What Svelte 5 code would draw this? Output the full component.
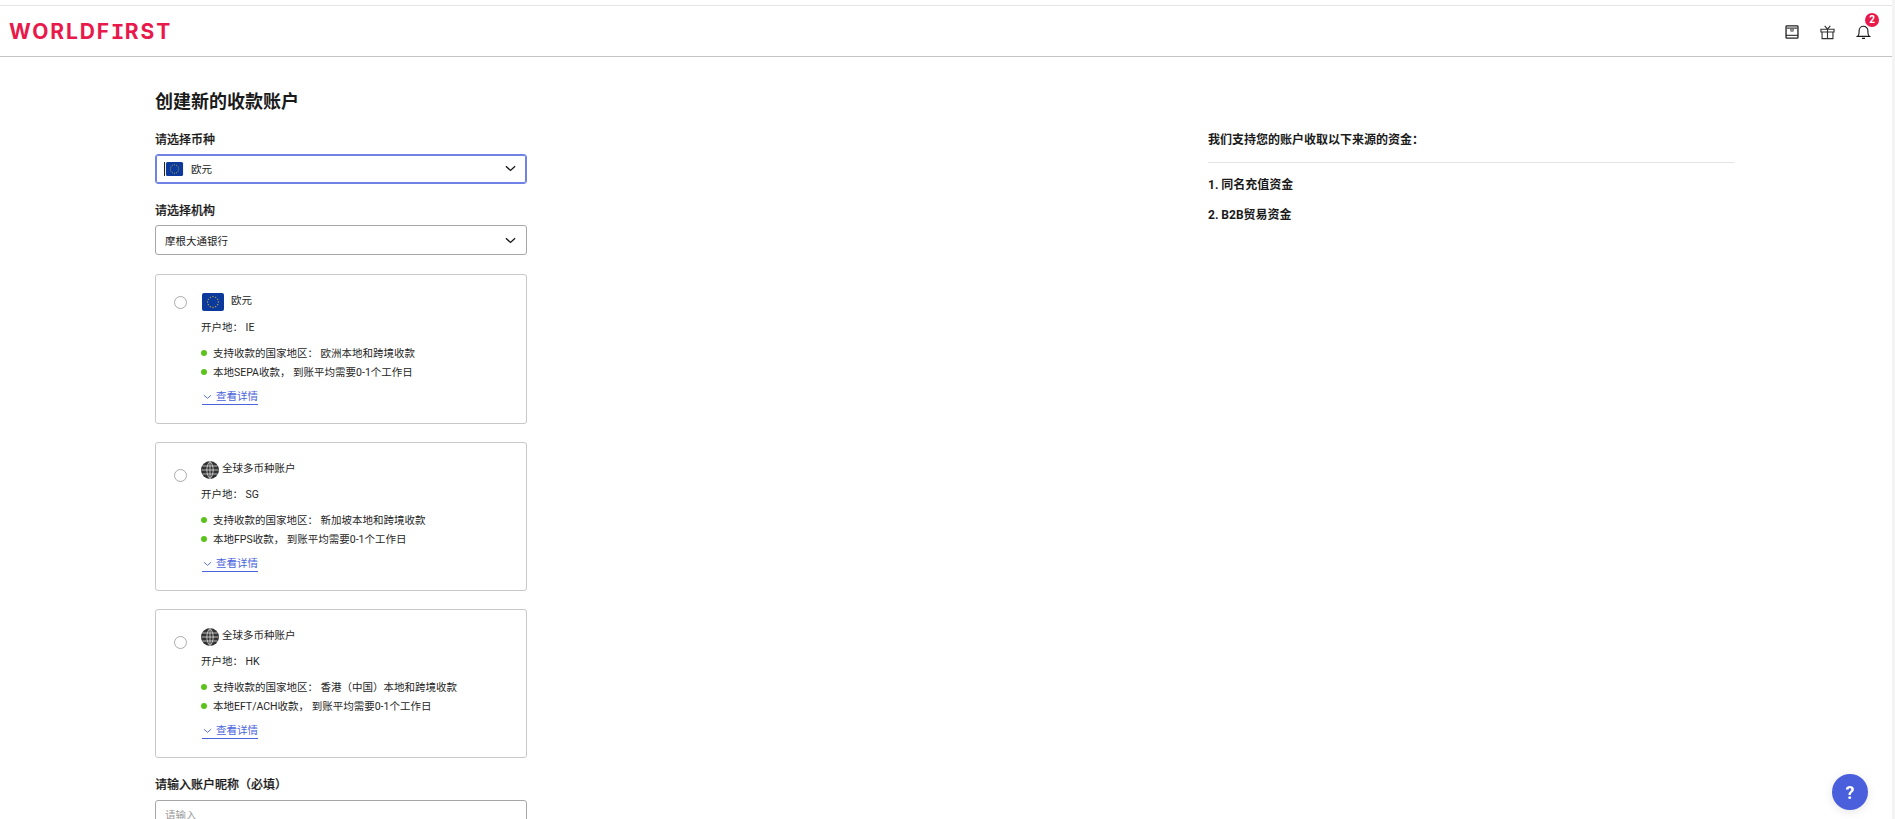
<script lang="ts">
	const cards = [
		{
			flag: true,
			name: '欧元',
			region: 'IE',
			reach: '欧洲本地和跨境收款',
			local: '本地SEPA收款，',
			speed: '到账平均需要0-1个工作日'
		},
		{
			flag: false,
			name: '全球多币种账户',
			region: 'SG',
			reach: '新加坡本地和跨境收款',
			local: '本地FPS收款，',
			speed: '到账平均需要0-1个工作日'
		},
		{
			flag: false,
			name: '全球多币种账户',
			region: 'HK',
			reach: '香港（中国）本地和跨境收款',
			local: '本地EFT/ACH收款，',
			speed: '到账平均需要0-1个工作日'
		}
	];

	// twelve stars round the flag's centre
	const stars = Array.from({ length: 12 }, (_, i) => ({
		x: 11 + 5.4 * Math.cos((i * Math.PI) / 6),
		y: 9 + 5.4 * Math.sin((i * Math.PI) / 6)
	}));
</script>

{#snippet euFlag(cls)}
	<svg class={cls} viewBox="0 0 22 18" aria-label="EU">
		<rect width="22" height="18" rx="2" fill="#0b3a9c" />
		{#each stars as s}
			<circle cx={s.x} cy={s.y} r="0.65" fill="#c9b13c" />
		{/each}
	</svg>
{/snippet}

{#snippet chevron()}
	<svg class="chevron" viewBox="0 0 12 7" aria-hidden="true">
		<path d="M1 1l5 4.6L11 1" fill="none" stroke="#1a1a1a" stroke-width="1.5" />
	</svg>
{/snippet}

<div class="page">
	<header class="topbar">
		<span class="logo">WORLDF<span class="logo-i">I</span>RST</span>
		<div class="actions">
			<svg class="icon box" viewBox="0 0 16 16" aria-label="Inbox">
				<rect x="1.2" y="1" width="13.6" height="14" rx="0.8" fill="none" stroke="#222" stroke-width="1.5" />
				<path d="M1.2 3.6h13.6" stroke="#555" stroke-width="1.6" />
				<circle cx="8" cy="5.6" r="2.2" fill="#666" />
				<circle cx="8" cy="5.6" r="0.8" fill="#ddd" />
				<path d="M1.2 11.8h13.6" stroke="#222" stroke-width="1.2" />
			</svg>
			<svg class="icon" viewBox="0 0 16 16" aria-label="Gift">
				<path
					d="M1 5h14v3H1zM2.2 8v7h11.6V8M8 5v10M8 5L5 1.4M8 5l3-3.6"
					fill="none"
					stroke="#333"
					stroke-width="1.2"
				/>
			</svg>
			<div class="bell">
				<svg class="icon" viewBox="0 0 16 16" aria-label="Notifications">
					<path
						d="M1.5 12.6c1.2-1 1.8-2 1.8-4.2V6.6a4.7 4.7 0 0 1 9.4 0v1.8c0 2.2.6 3.2 1.8 4.2z"
						fill="none"
						stroke="#1a1a1a"
						stroke-width="1.2"
					/>
					<path d="M6.4 14.8h3.2" stroke="#1a1a1a" stroke-width="1.4" />
				</svg>
				<span class="badge">2</span>
			</div>
		</div>
	</header>

	<main class="content">
		<section class="form">
			<h1>创建新的收款账户</h1>

			<div class="label">请选择币种</div>
			<div class="select focused">
				{@render euFlag('select-flag')}
				<span>欧元</span>
				{@render chevron()}
			</div>

			<div class="label second">请选择机构</div>
			<div class="select">
				<span>摩根大通银行</span>
				{@render chevron()}
			</div>

			<div class="cards">
				{#each cards as card}
					<div class="card">
						<span class="radio" class:low={!card.flag}></span>
						<div class="card-body">
							<div class="card-title" class:with-globe={!card.flag}>
								{#if card.flag}
									{@render euFlag('card-flag')}
								{:else}
									<svg class="globe" viewBox="0 0 18 18" aria-label="Global">
										<circle cx="9" cy="9" r="9" fill="#333" />
										<path
											d="M1.5 5h15M.5 9h17M1.5 13h15M9 0v18M9 .5C4.8 4 4.8 14 9 17.5M9 .5c4.2 3.5 4.2 13.5 0 17"
											fill="none"
											stroke="#ddd"
											stroke-width="0.8"
										/>
									</svg>
								{/if}
								<span>{card.name}</span>
							</div>
							<div class="region">开户地： <span>{card.region}</span></div>
							<ul>
								<li>支持收款的国家地区： <span>{card.reach}</span></li>
								<li>{card.local} <span>{card.speed}</span></li>
							</ul>
							<a class="more" href="#details">
								<svg viewBox="0 0 10 6" aria-hidden="true">
									<path d="M1 1l4 3.5L9 1" fill="none" stroke="#4a64dc" stroke-width="1" />
								</svg>
								<span>查看详情</span>
							</a>
						</div>
					</div>
				{/each}
			</div>

			<div class="label nickname">请输入账户昵称（必填）</div>
			<input class="select text" placeholder="请输入" />
		</section>

		<aside class="info">
			<h2>我们支持您的账户收取以下来源的资金：</h2>
			<p>1. 同名充值资金</p>
			<p>2. B2B贸易资金</p>
		</aside>
	</main>

	<div class="scroll-track"></div>
	<button class="help" aria-label="帮助">?</button>
</div>

<style>
	:global(body) {
		margin: 0;
		overflow: hidden;
		background: #fff;
	}

	.page {
		height: 819px;
		overflow: hidden;
		font-family: Roboto, 'Noto Sans CJK SC', sans-serif;
		color: #1a1a1a;
	}

	.topbar {
		display: flex;
		align-items: center;
		justify-content: space-between;
		height: 50px;
		margin-top: 5px;
		padding: 0 24px 0 9px;
		border-top: 1px solid #e6e6e6;
		border-bottom: 1px solid #c4c4c4;
	}

	.logo {
		padding-top: 3px;
		font-family: Inter, sans-serif;
		font-size: 21px;
		font-weight: 700;
		letter-spacing: 1.9px;
		color: #e8194b;
	}

	.logo-i {
		font-family: 'Liberation Mono', monospace;
		font-size: 22px;
		font-weight: 700;
		letter-spacing: 0.6px;
	}

	.actions {
		display: flex;
		align-items: center;
		gap: 21px;
		padding-top: 2px;
	}

	.icon {
		display: block;
		width: 15px;
		height: 16px;
	}

	.icon.box {
		width: 14px;
	}

	.bell {
		position: relative;
	}

	.badge {
		position: absolute;
		top: -11px;
		left: 9px;
		width: 14px;
		height: 14px;
		border-radius: 50%;
		background: #e8194b;
		color: #fff;
		font-size: 10px;
		font-weight: 700;
		line-height: 14px;
		text-align: center;
	}

	.content {
		display: flex;
		padding-left: 155px;
	}

	.form {
		width: 372px;
		flex: none;
	}

	h1 {
		margin: 33px 0 0;
		font-size: 18px;
		line-height: 24px;
		font-weight: 700;
	}

	.label {
		margin: 18px 0 6px;
		font-size: 12px;
		line-height: 16px;
		font-weight: 500;
		-webkit-text-stroke: 0.2px #1a1a1a;
	}

	.label.second {
		margin-top: 19px;
	}

	.select {
		box-sizing: border-box;
		display: flex;
		align-items: center;
		width: 372px;
		height: 30px;
		padding: 0 9px;
		border: 1px solid #a6a6a6;
		border-radius: 3px;
		font-size: 10.5px;
		background: #fff;
	}

	.select.focused {
		padding-bottom: 2px;
		border: 1px solid #6f83e6;
		box-shadow: inset 0 0 0 1px #6f83e6;
	}

	.select.text {
		display: block;
		font-family: inherit;
		outline: none;
	}

	.select.text::placeholder {
		color: #999;
	}

	.select-flag {
		width: 19px;
		height: 14px;
		margin-top: 2px;
		margin-left: -1px;
		margin-right: 7px;
		border-left: 1px solid #222;
	}

	.chevron {
		width: 11px;
		height: 7px;
		margin-left: auto;
		margin-right: 1px;
	}

	.cards {
		display: flex;
		flex-direction: column;
		gap: 18px;
		margin-top: 19px;
	}

	.card {
		box-sizing: border-box;
		display: flex;
		padding: 19px 20px 0 18px;
		height: 149px;
		border: 1px solid #c8c8c8;
		border-radius: 3px;
	}

	.card:first-child {
		height: 150px;
		padding-top: 18px;
	}

	.radio {
		box-sizing: border-box;
		flex: none;
		width: 13px;
		height: 13px;
		margin-top: 3px;
		margin-right: 14px;
		border: 1px solid #aaa;
		border-radius: 50%;
	}

	.radio.low {
		margin-top: 7px;
	}

	.card-body {
		font-size: 10.5px;
		line-height: 16px;
		color: #262626;
	}

	.card-title {
		display: flex;
		align-items: center;
		gap: 7px;
		height: 18px;
	}

	.card-title span {
		margin-top: -3px;
	}

	.card-title.with-globe {
		gap: 3px;
		margin-top: -1px;
		margin-bottom: -1px;
	}

	.card-flag {
		width: 22px;
		height: 18px;
		margin-left: 1px;
	}

	.globe {
		width: 18px;
		height: 18px;
	}

	.region {
		margin-top: 9px;
	}

	ul {
		margin: 8px 0 0;
		padding: 0;
		list-style: none;
	}

	li {
		position: relative;
		padding-left: 12px;
		height: 19px;
		line-height: 19px;
		white-space: nowrap;
	}

	li::before {
		content: '';
		position: absolute;
		left: 0;
		top: 6px;
		width: 6px;
		height: 6px;
		border-radius: 50%;
		background: #5cc21c;
	}

	.more {
		display: inline-flex;
		align-items: center;
		gap: 4px;
		margin-top: 8px;
		margin-left: 1px;
		padding-left: 1px;
		line-height: 14px;
		color: #4a64dc;
		text-decoration: none;
		border-bottom: 1px solid #4a64dc;
	}

	.more svg {
		width: 9px;
		height: 6px;
	}

	.nickname {
		margin-top: 19px;
		margin-bottom: 7px;
	}

	.info {
		width: 526px;
		margin-left: 681px;
		padding-top: 74px;
		font-size: 12px;
	}

	h2 {
		margin: 0;
		padding-bottom: 13px;
		font-size: 12px;
		line-height: 18px;
		font-weight: 700;
		border-bottom: 1px solid #e4e4e4;
	}

	.info p {
		margin: 13px 0 0;
		line-height: 18px;
		font-weight: 700;
	}

	.info p + p {
		margin-top: 12px;
	}

	.scroll-track {
		position: fixed;
		top: 0;
		right: 0;
		bottom: 0;
		width: 3px;
		background: #f4f4f4;
	}

	.help {
		position: fixed;
		left: 1832px;
		top: 774px;
		width: 36px;
		height: 36px;
		padding: 0;
		border: 0;
		border-radius: 50%;
		background: #4a5fdc;
		box-shadow: 0 2px 10px rgba(0, 0, 0, 0.1);
		color: #fff;
		font: 700 18px Roboto, sans-serif;
	}
</style>
